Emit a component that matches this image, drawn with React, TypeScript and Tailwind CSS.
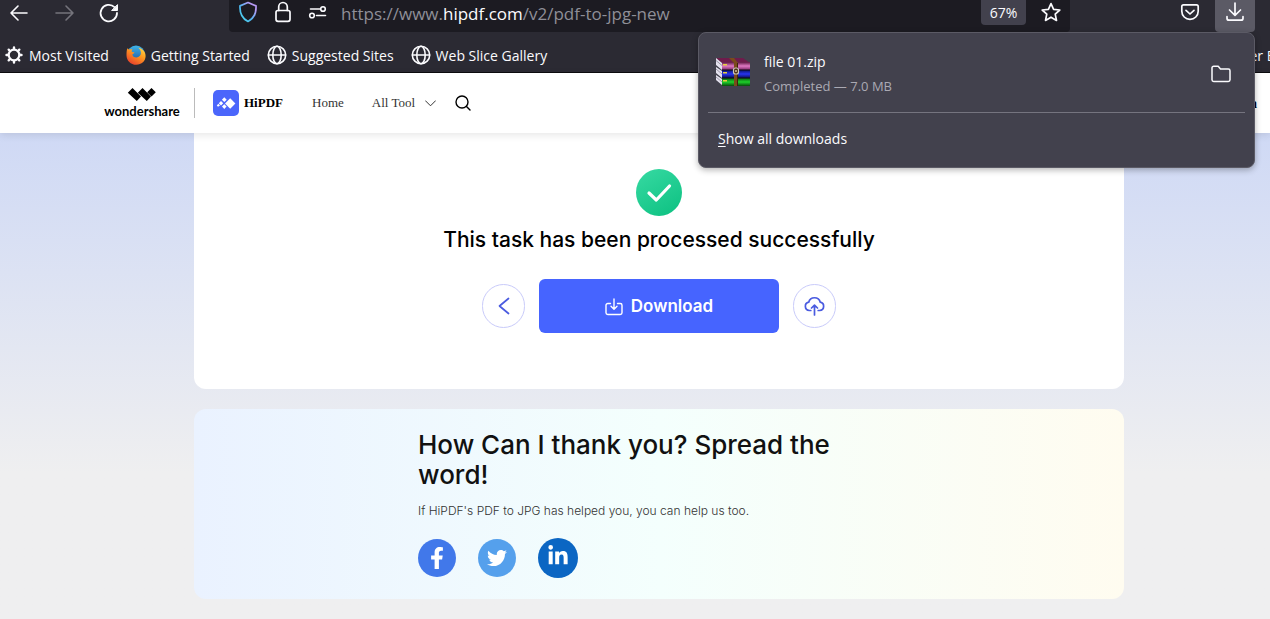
import type { ReactNode } from "react";
import { FaFacebookF, FaLinkedinIn, FaTwitter } from "react-icons/fa";

const stroke = {
    fill: "none",
    stroke: "currentColor",
    strokeLinecap: "round",
    strokeLinejoin: "round",
} as const;

function GlobeIcon() {
    return <svg className="size-5" viewBox="0 0 20 20" {...stroke} strokeWidth="1.6" aria-hidden="true">
        <circle cx="10" cy="10" r="8.7"/>
        <ellipse cx="10" cy="10" rx="4.2" ry="8.7"/>
        <path d="M1.5 10h17"/>
    </svg>
}

function GearIcon() {
    return <svg className="size-5" viewBox="0 0 20 20" {...stroke} aria-hidden="true">
        <circle cx="10" cy="10" r="5.3" strokeWidth="2.2"/>
        <path strokeWidth="2.4" d="M10 4V2.5M10 16v1.5M4 10H2.5M16 10h1.5M5.8 5.8 4.7 4.7M14.2 5.8l1.1-1.1M5.8 14.2l-1.1 1.1M14.2 14.2l1.1 1.1"/>
    </svg>
}

function FirefoxIcon() {
    return <svg className="size-5" viewBox="0 0 20 20" aria-hidden="true">
        <defs>
            <linearGradient id="flame" x1="1" y1="0" x2="0.3" y2="1">
                <stop offset="0" stopColor="#ffe14a"/>
                <stop offset="0.45" stopColor="#ff9a1f"/>
                <stop offset="1" stopColor="#e8412c"/>
            </linearGradient>
            <linearGradient id="globe" x1="0" y1="0" x2="0" y2="1">
                <stop offset="0" stopColor="#3fb4e8"/>
                <stop offset="1" stopColor="#1c4f9c"/>
            </linearGradient>
        </defs>
        <circle cx="10" cy="9.5" r="9" fill="url(#globe)"/>
        <path fill="url(#flame)" d="M1.4 3.2C2 4 2.6 4.4 3.4 4.6c1-.5 2-.5 3-.2-.6.6-.9 1.2-.8 2 .6.6 1.5.9 2.8.9-.1 1-.9 1.4-2 1.9.1 2.2 2 3.5 4.2 3.3 2.5-.2 4.3-2 4.3-4.5 0-2.2-1-4-2.7-5.2 4 .6 7.4 3.7 7.4 8.2 0 4.9-4 8.8-9.4 8.8C4.7 19.8.5 15.6.5 10.2.5 7.5.6 5 1.4 3.2z"/>
    </svg>
}

function ArchiveIcon() {
    return <svg className="h-8 w-9" viewBox="0 3 36 32" aria-hidden="true">
        <defs>
            <linearGradient id="pink" x1="0" y1="0" x2="0" y2="1">
                <stop offset="0" stopColor="#5d1740"/>
                <stop offset="0.5" stopColor="#e07ac4"/>
                <stop offset="1" stopColor="#7d2467"/>
            </linearGradient>
            <linearGradient id="blue" x1="0" y1="0" x2="0" y2="1">
                <stop offset="0" stopColor="#0b1266"/>
                <stop offset="0.5" stopColor="#2634f0"/>
                <stop offset="1" stopColor="#080b52"/>
            </linearGradient>
            <linearGradient id="green" x1="0" y1="0" x2="0" y2="1">
                <stop offset="0" stopColor="#0a5a10"/>
                <stop offset="0.5" stopColor="#1ed12a"/>
                <stop offset="1" stopColor="#07480b"/>
            </linearGradient>
        </defs>
        <path fill="#6e1c4c" d="M1 3h27l7 5H7z"/>
        <path fill="#e4e2ee" d="m1 3 6 5v7L1 10zM1 12l6 4v7l-6-5zM1 20l6 4v6l-6-5z"/>
        <path stroke="#8b8798" strokeWidth=".8" d="m1 5.5 6 5M1 14l6 5M1 22l6 5" fill="none"/>
        <path fill="url(#pink)" d="M7 7h28v8H7z"/>
        <path fill="url(#blue)" d="M7 15h28v8H7z"/>
        <path fill="url(#green)" d="M7 23h28v8H7z"/>
        <path fill="#101018" d="M7 14.5h28v1H7zM7 22.5h28v1H7z"/>
        <path fill="#e6cf3d" d="M8 9h4v1.5H8zM8 17h4v1.5H8zM8 25h4v1.5H8z"/>
        <path fill="#7a4a1b" d="M14 3h5l4 5v23h-4V8z"/>
        <path fill="#3d230b" d="M22 8h1v23h-1z"/>
        <rect x="18.5" y="13" width="5" height="6" rx="2" fill="#4e3010" stroke="#c9c6bd" strokeWidth="1.2"/>
        <path stroke="#f0e8c8" strokeWidth="1.2" d="M21 15v2"/>
    </svg>
}

function WondershareLogo() {
    return <a href="#" className="flex w-[78px] flex-col items-center">
        <svg className="h-[15px] w-[30px]" viewBox="0 0 30 15" fill="#000" aria-hidden="true">
            <path d="m5.5 1 8.500 8.500L9.800 14 .8 5.700zM15.500 1l8.500 8.500L19.800 14l-9-8.300zM24.500 1l4.300 4.300-4.300 4.300-4.300-4.300z"/>
        </svg>
        <span className="mt-px font-['Lato',sans-serif] text-[13px] leading-[16px] font-bold text-black">wondershare</span>
    </a>
}

function HiPdfLogo() {
    return <svg className="size-[26px]" viewBox="0 0 26 26" aria-hidden="true">
        <rect width="26" height="26" rx="5" fill="#4b66fb"/>
        <g fill="#fff">
            <path d="m17.200 8.300 5.200 5.200-5.200 5.200-5.200-5.200z"/>
            <path d="m11.300 7.300 2.400 2.400-2.400 2.400-2.400-2.400z"/>
            <path d="m8 11 2.200 2.300L8 15.600l-2.200-2.300z"/>
            <path d="m11.300 14.300 2.300 2.300-2.300 2.300L9 16.600z"/>
            <path d="M5.300 13.800 7 15.500l-2 1.200-1.200-1.300z"/>
        </g>
    </svg>
}

function Bookmark({ icon, label }: { icon: ReactNode; label: string }) {
    return <a href="#" className="flex items-center gap-[5px] whitespace-nowrap">
        {icon}
        <span>{label}</span>
    </a>
}

function AddressRow() {
    return <div className="flex h-8 items-start">
        <div className="flex w-[229px] shrink-0 items-center gap-[21px] pt-px pl-[7px]">
            <button aria-label="Back" className="size-6">
                <svg viewBox="0 0 24 24" {...stroke} strokeWidth="1.6"><path d="M20 12H4M11 5l-7 7 7 7"/></svg>
            </button>
            <button aria-label="Forward" className="size-6 text-[#75747c]" disabled>
                <svg viewBox="0 0 24 24" {...stroke} strokeWidth="1.6"><path d="M4 12h17M14 5l7 7-7 7"/></svg>
            </button>
            <button aria-label="Reload" className="size-6">
                <svg viewBox="0 0 24 24" {...stroke} strokeWidth="1.8">
                    <path d="M17.500 6.200A8.200 8.200 0 1 0 20 12"/>
                    <path fill="currentColor" strokeWidth="1" d="M20.500 4v5.500H15z"/>
                </svg>
            </button>
        </div>
        <div className="flex h-8 max-w-[841px] grow items-start rounded-b bg-[#1c1b22] pl-2">
            <svg className="mt-px size-[22px]" viewBox="0 0 22 22" fill="none" aria-hidden="true">
                <defs>
                    <linearGradient id="shield" x1="1" y1="0" x2="0" y2="1">
                        <stop offset="0.2" stopColor="#b79af5"/>
                        <stop offset="0.6" stopColor="#4db5ef"/>
                        <stop offset="1" stopColor="#4fe0ee"/>
                    </linearGradient>
                </defs>
                <path stroke="url(#shield)" strokeWidth="1.7" strokeLinejoin="round" d="m11 1.500 8 3.400c.4 7.300-2.300 12.700-8 15.600C5.300 17.600 2.600 12.200 3 4.900z"/>
            </svg>
            <svg className="mt-px ml-[13px] size-[22px]" viewBox="0 0 22 22" {...stroke} strokeWidth="1.7" aria-hidden="true">
                <rect x="4" y="9.500" width="14" height="10.800" rx="2"/>
                <path d="M6.700 9.500V5.800a4.300 4.300 0 0 1 8.600 0v3.700"/>
            </svg>
            <svg className="mt-px ml-[13px] size-[22px]" viewBox="0 0 22 22" {...stroke} strokeWidth="1.6" aria-hidden="true">
                <path d="M3.500 8H13M9.500 14.500h9"/>
                <circle cx="16" cy="8" r="2.300"/>
                <circle cx="5" cy="14.500" r="2.300"/>
            </svg>
            <p className="ml-3 text-[17px] leading-[28px] text-[#8f8f98]">
                https://www.<span className="text-[#fbfbfe]">hipdf.com</span>/v2/pdf-to-jpg-new
            </p>
            <button className="mr-[13px] ml-auto h-[25px] w-[45px] rounded-b bg-[#42414d] text-[14px]">67%</button>
            <button aria-label="Bookmark this page" className="mr-[7px] size-6">
                <svg viewBox="0 0 24 24" {...stroke} strokeWidth="1.7">
                    <path d="m12 3.600 2.600 5.700 6.200.7-4.600 4.200 1.300 6.200-5.500-3.200-5.500 3.200 1.300-6.200L3.200 10l6.200-.7z"/>
                </svg>
            </button>
        </div>
        <div className="ml-auto flex items-start gap-[13px] pr-[15px]">
            <button aria-label="Save to Pocket" className="size-6">
                <svg viewBox="0 0 24 24" {...stroke} strokeWidth="1.7">
                    <path d="M5.500 4.800h13c1 0 1.700.7 1.700 1.700v4.700a8.200 8.200 0 0 1-16.400 0V6.500c0-1 .7-1.700 1.700-1.700z"/>
                    <path d="m8 10.300 4 3.700 4-3.700"/>
                </svg>
            </button>
            <button aria-label="Downloads" className="flex h-8 w-10 justify-center rounded-b bg-[#5b5a65]">
                <svg className="size-6" viewBox="0 0 24 24" {...stroke} strokeWidth="1.7">
                    <path d="M12 3v12M6.500 10l5.500 5.300 5.500-5.300"/>
                    <path d="M4 16.500v1.700c0 1.100.8 2 2 2h12c1.200 0 2-.9 2-2v-1.700"/>
                </svg>
            </button>
        </div>
    </div>
}

function BrowserBar() {
    return <div className="bg-[#2b2a33] font-['Open_Sans','Noto_Sans',sans-serif] text-[#fbfbfe]">
        <AddressRow/>
        <nav className="flex h-[41px] items-center gap-[17px] overflow-hidden border-b border-[#0c0c0f] pt-[6px] pl-1 text-[14px]">
            <Bookmark icon={<GearIcon/>} label="Most Visited"/>
            <Bookmark icon={<FirefoxIcon/>} label="Getting Started"/>
            <Bookmark icon={<GlobeIcon/>} label="Suggested Sites"/>
            <Bookmark icon={<GlobeIcon/>} label="Web Slice Gallery"/>
            <a href="#" className="ml-auto w-[45px] whitespace-nowrap">Other B</a>
        </nav>
    </div>
}

function SiteHeader() {
    return <header className="relative flex h-[60px] items-center bg-white pl-[103px] font-['Liberation_Serif',serif] text-[13px] text-[#333] shadow-[0_2px_8px_rgba(0,0,0,0.1)]">
        <WondershareLogo/>
        <span className="ml-[13px] h-[30px] w-px bg-[#bbb]"/>
        <a href="#" className="ml-[18px] flex items-center gap-[5px] font-bold text-black">
            <HiPdfLogo/>
            HiPDF
        </a>
        <nav className="ml-[29px] flex items-center gap-7">
            <a href="#">Home</a>
            <a href="#" className="flex items-center gap-[10px]">
                All Tool
                <svg className="h-[7px] w-[11px]" viewBox="0 0 11 7" {...stroke} aria-hidden="true"><path d="m.5.8 5 5 5-5"/></svg>
            </a>
        </nav>
        <button aria-label="Search" className="ml-[19px] size-4 text-black">
            <svg viewBox="0 0 16 16" {...stroke} strokeWidth="1.4"><circle cx="7" cy="7" r="6"/><path d="m11.500 11.500 3.500 3.500"/></svg>
        </button>
        <span className="mr-[13px] ml-auto text-[14px] font-bold text-black">a</span>
    </header>
}

function DownloadsPanel() {
    return <section aria-label="Downloads" className="absolute top-8 right-[15px] z-20 w-[557px] rounded-lg border border-[#5b5a65] bg-[#42414d] px-[9px] font-['Open_Sans','Noto_Sans',sans-serif] text-[#fbfbfe] shadow-[0_2px_6px_rgba(0,0,0,0.3)]">
        <div className="flex h-20 items-center border-b border-[#75747f] pt-[3px] pr-[13px] pl-[7px]">
            <ArchiveIcon/>
            <div className="ml-[13px]">
                <p className="text-[14px] leading-6">file 01.zip</p>
                <p className="text-[13px] leading-6 text-[#aaa9b3]">Completed — 7.0 MB</p>
            </div>
            <button aria-label="Open containing folder" className="ml-auto size-[22px]">
                <svg viewBox="0 0 22 22" {...stroke} strokeWidth="1.5">
                    <path d="M2 5c0-1 .7-1.700 1.700-1.700h4.500L10.500 6h7.800c1 0 1.700.7 1.700 1.700v9c0 1-.7 1.700-1.700 1.700H3.700C2.700 18.400 2 17.700 2 16.700z"/>
                </svg>
            </button>
        </div>
        <button className="flex h-[54px] w-full items-center pb-1 pl-[10px] text-[14px]">
            <span><span className="underline underline-offset-2">S</span>how all downloads</span>
        </button>
    </section>
}

function ResultCard() {
    return <section className="flex flex-col items-center rounded-b-xl bg-white pt-9 pb-14">
        <svg className="h-[47px] w-[46px]" viewBox="0 0 46 47" aria-hidden="true">
            <defs>
                <linearGradient id="done" x1="0.2" y1="0" x2="0.8" y2="1">
                    <stop offset="0" stopColor="#34d8a0"/>
                    <stop offset="1" stopColor="#0fc283"/>
                </linearGradient>
            </defs>
            <ellipse cx="23" cy="23.5" rx="23" ry="23.5" fill="url(#done)"/>
            <path d="m13 24 7.300 7L33.500 17" fill="none" stroke="#fff" strokeWidth="3.2" strokeLinecap="round" strokeLinejoin="round"/>
        </svg>
        <h1 className="mt-[9px] text-[21px] leading-[30px] font-medium text-black">This task has been processed successfully</h1>
        <div className="mt-6 flex items-center gap-[14px]">
            <button aria-label="Go back" className="flex h-11 w-[43px] items-center justify-center rounded-full border border-[#c9cbfa] text-[#4a5be0]">
                <svg className="h-[18px] w-3" viewBox="0 0 12 18" {...stroke} strokeWidth="1.7"><path d="m10.500 1.500-9 7.500 9 7.500"/></svg>
            </button>
            <button className="flex h-[54px] w-60 items-center justify-center gap-2 rounded-md bg-[#4664ff] pt-px text-[17px] font-semibold text-white">
                <svg className="size-[18px]" viewBox="0 0 18 18" {...stroke} strokeWidth="1.4" aria-hidden="true">
                    <path d="M5.500 5.500H2.800C1.800 5.500 1 6.200 1 7.200v7.600c0 1 .8 1.700 1.800 1.700h12.400c1 0 1.800-.7 1.800-1.700V7.200c0-1-.8-1.700-1.800-1.700h-2.700M9 1v10M6 8.300l3 3 3-3"/>
                </svg>
                Download
            </button>
            <button aria-label="Save to cloud" className="flex h-11 w-[43px] items-center justify-center rounded-full border border-[#c9cbfa] text-[#4a5be0]">
                <svg className="h-5 w-[21px]" viewBox="0 0 21 20" {...stroke} strokeWidth="1.7">
                    <path d="M6.800 14.500H5.300A4.200 4.200 0 0 1 4.700 6.200a6 6 0 0 1 11.600 0 4.200 4.200 0 0 1-.6 8.300h-1.500M10.500 19V9.500M7.500 12l3-2.800 3 2.800"/>
                </svg>
            </button>
        </div>
    </section>
}

function ShareCard() {
    return <section className="rounded-xl bg-linear-to-r from-[#eaf2ff] via-[#f4fffd] to-[#fffcf0] py-[21px] pr-6 pl-[224px]">
        <h2 className="max-w-[440px] text-[26px] leading-[30px] font-medium text-[#111]">How Can I thank you? Spread the word!</h2>
        <p className="mt-3 text-[12px] leading-[18px] font-light text-[#333]">If HiPDF's PDF to JPG has helped you, you can help us too.</p>
        <div className="mt-[18px] flex items-center gap-[22px]">
            <a href="#" aria-label="Facebook" className="flex size-[38px] items-center justify-center rounded-full bg-[#4178ea] text-white">
                <FaFacebookF className="size-[22px]"/>
            </a>
            <a href="#" aria-label="Twitter" className="flex size-[38px] items-center justify-center rounded-full bg-[#55a0ec] text-white">
                <FaTwitter className="size-5"/>
            </a>
            <a href="#" aria-label="LinkedIn" className="flex size-10 items-center justify-center rounded-full bg-[#0b66c3] pb-1 text-white">
                <FaLinkedinIn className="size-[22px]"/>
            </a>
        </div>
    </section>
}

export default function App() {
    return <div className="relative min-h-screen overflow-x-hidden bg-[#efeff0]">
        <BrowserBar/>
        <DownloadsPanel/>
        <SiteHeader/>
        <main className="flex flex-col gap-5 bg-linear-to-b from-[#cfd9f5] to-[#efeff0] to-[70%] pr-[146px] pb-5 pl-[194px] font-['Inter',sans-serif]">
            <ResultCard/>
            <ShareCard/>
        </main>
    </div>
}
